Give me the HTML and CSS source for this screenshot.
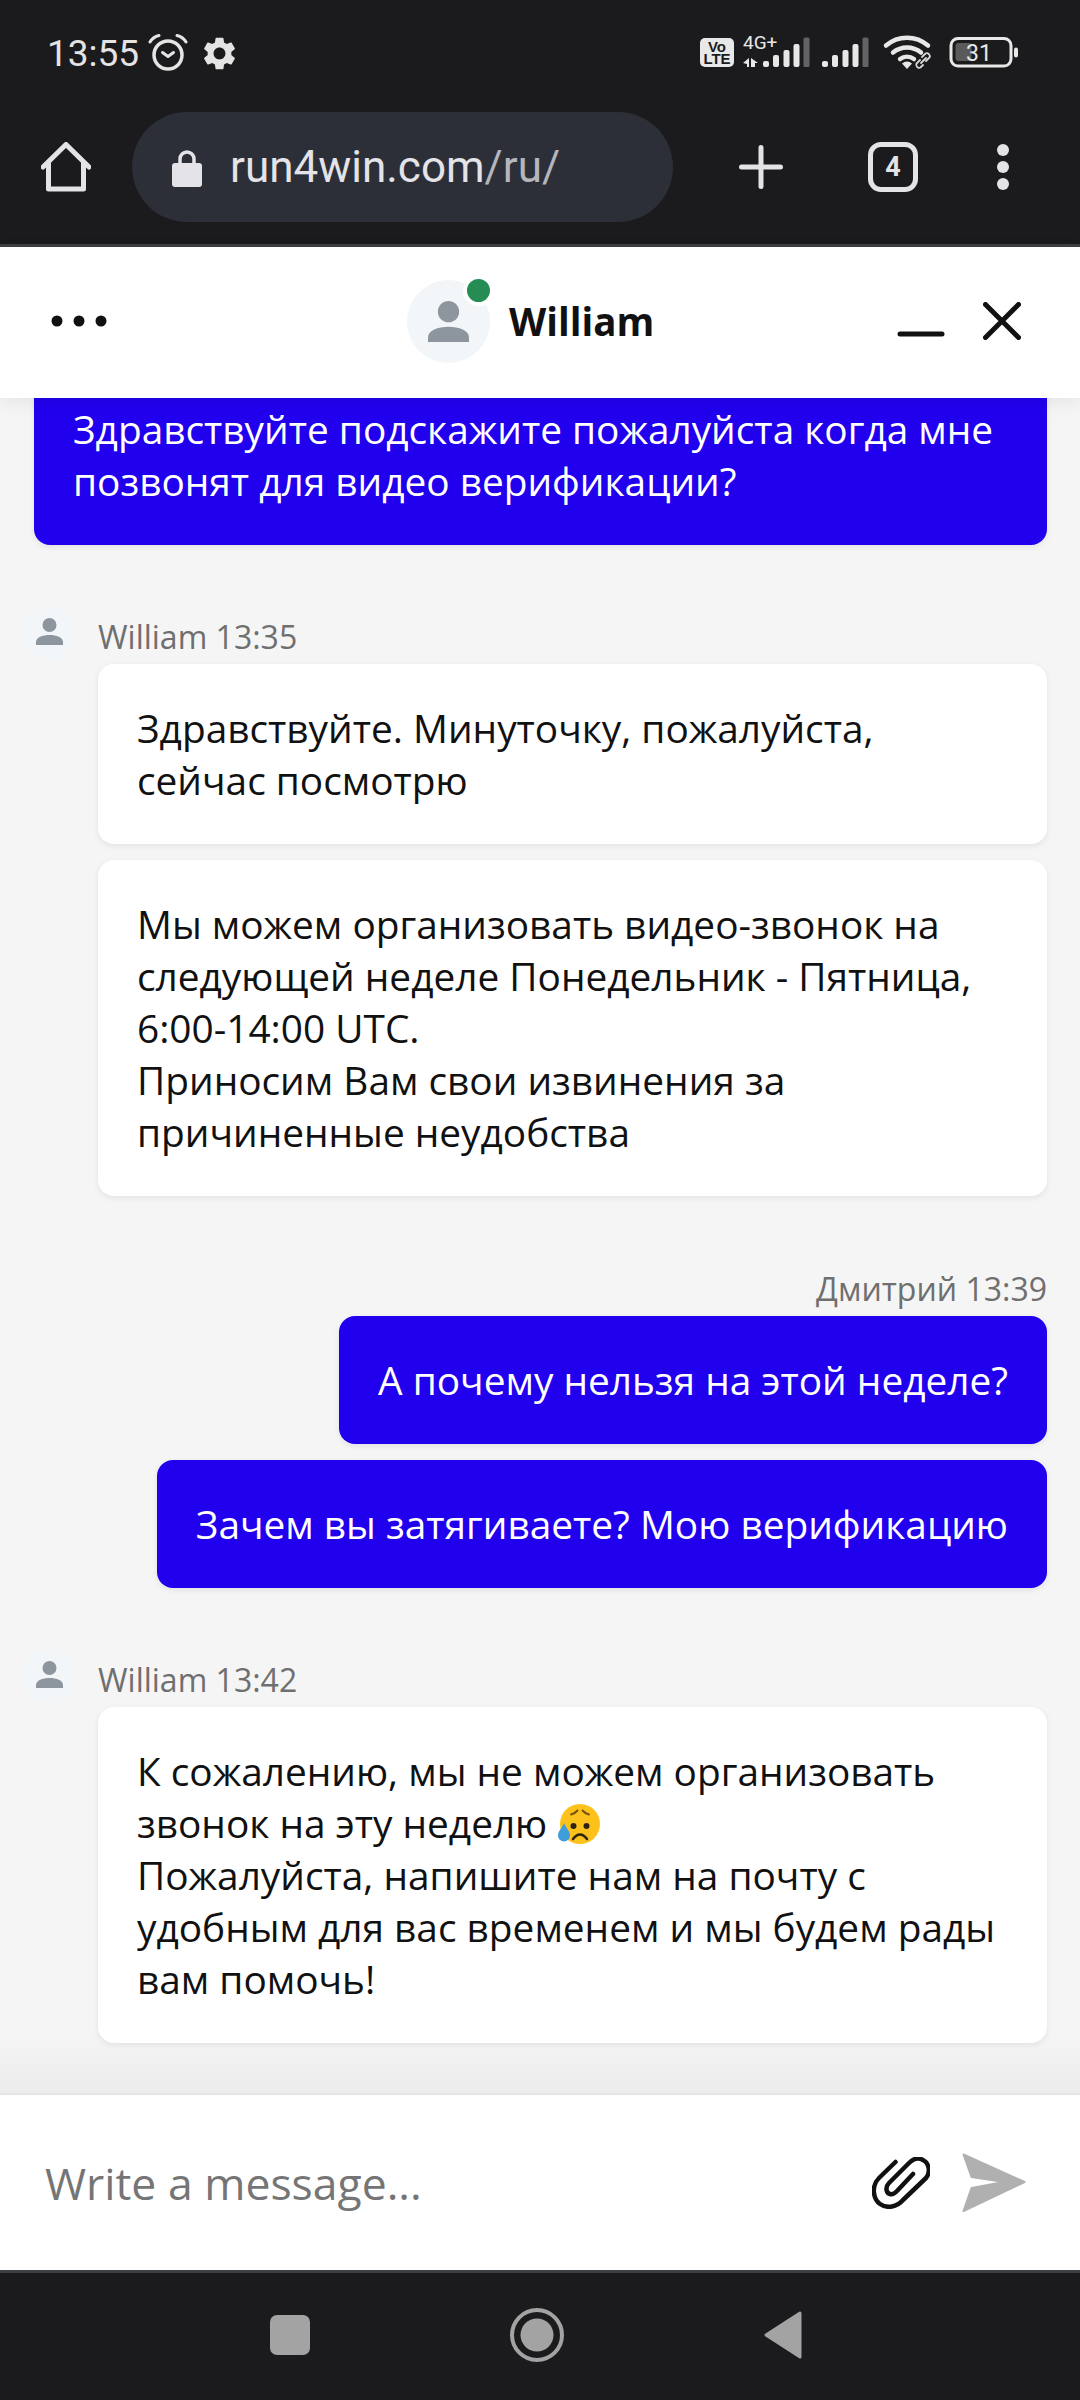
FILE: index.html
```html
<!DOCTYPE html>
<html lang="ru">
<head>
  <meta charset="UTF-8" />
  <meta name="viewport" content="width=device-width, initial-scale=1.0"/>
  <title>run4win chat</title>
  <link rel="stylesheet" href="styles.css">
</head>
<body>

  <svg width="0" height="0" class="defs">
    <defs>
      <symbol id="person" viewBox="0 0 27 27">
        <circle cx="13.5" cy="7" r="7"/>
        <path d="M0 27v-3C0 19.500 6.500 17 13.500 17S27 19.500 27 24v3z"/>
      </symbol>
    </defs>
  </svg>

  <div class="phone">

    <header class="browser">
      <div class="statusbar">
        <span class="clock">13:55</span>
        <svg class="alarm" width="40" height="38" viewBox="0 0 40 38" fill="none" stroke="#e4e4e4" stroke-linecap="round" stroke-linejoin="round">
          <circle cx="20" cy="22" r="14" stroke-width="3.500"/>
          <path d="M2 9Q5 4 11 2.500M29 2.500Q35 4 38 9" stroke-width="3"/>
          <path d="M14.500 19.500L20 23.500l5.500-4" stroke-width="3"/>
        </svg>
        <svg class="gear" width="33" height="33" viewBox="2 2 20 20" fill="#e4e4e4">
          <path d="M19.140 12.940c.04-.3.06-.61.06-.94 0-.32-.02-.64-.07-.94l2.030-1.580c.18-.14.23-.41.120-.61l-1.920-3.320c-.12-.22-.37-.29-.59-.22l-2.390.96c-.5-.38-1.030-.7-1.620-.94l-.36-2.540c-.04-.24-.24-.41-.48-.41h-3.840c-.24 0-.43.17-.47.41l-.36 2.540c-.59.24-1.130.57-1.620.94l-2.390-.96c-.22-.08-.47 0-.59.22L2.740 8.870c-.12.21-.08.47.12.61l2.030 1.580c-.05.3-.09.63-.09.94s.02.64.07.94l-2.030 1.580c-.18.14-.23.41-.12.61l1.920 3.320c.12.22.37.29.59.22l2.390-.96c.5.38 1.030.7 1.620.94l.36 2.540c.05.24.24.41.48.41h3.840c.24 0 .44-.17.47-.41l.36-2.540c.59-.24 1.130-.56 1.620-.94l2.390.96c.22.08.47 0 .59-.22l1.920-3.320c.12-.22.07-.47-.12-.61l-2.010-1.580zM12 15.600c-1.980 0-3.600-1.620-3.600-3.600s1.620-3.600 3.600-3.600 3.600 1.620 3.600 3.600-1.620 3.600-3.600 3.600z"/>
        </svg>

        <svg class="status-icons" width="320" height="42" viewBox="0 0 320 42">
          <rect y="6" width="34" height="29" rx="5" fill="#e8e8e8"/>
          <text class="volte" x="17" y="19.500">Vo</text>
          <text class="volte" x="17" y="32">LTE</text>
          <text class="net" x="43" y="17">4G+</text>
          <path d="M43 31l6-5v9h-2v-3zM51 26l7 5h-3v4h-4z" fill="#e8e8e8"/>
          <g fill="#e8e8e8">
            <rect x="63" y="29" width="6" height="6" rx="2"/>
            <rect x="73" y="23" width="6" height="12" rx="2"/>
            <rect x="83.500" y="18" width="6" height="17" rx="2"/>
            <rect x="93.500" y="12" width="6" height="23" rx="2"/>
            <rect x="103.500" y="5.500" width="6" height="29.500" rx="1.500" fill="#636363"/>
            <rect x="122" y="29" width="6" height="6" rx="2"/>
            <rect x="132" y="23" width="6" height="12" rx="2"/>
            <rect x="142.500" y="18" width="6" height="17" rx="2"/>
            <rect x="152.500" y="12" width="6" height="23" rx="2"/>
            <rect x="162.500" y="5.500" width="6" height="29.500" rx="1.500" fill="#636363"/>
          </g>
          <g fill="none" stroke="#e8e8e8" stroke-linecap="round">
            <path d="M186 13.500A32 32 0 0 1 228 13.500" stroke-width="4.500"/>
            <path d="M193 20.500A22 22 0 0 1 221 20.500" stroke-width="4.500"/>
            <path d="M200 27A12 12 0 0 1 214 27" stroke-width="4.500"/>
          </g>
          <path d="M202 31.500a8 8 0 0 1 10 0L207 37z" fill="#e8e8e8"/>
          <g fill="none" stroke="#d8d8d8" stroke-width="1.800" stroke-linecap="round">
            <path d="M223 33l-2.500 2.500a3 3 0 0 1-4-4L220 28"/>
            <path d="M226 29l3.500-3.500a3 3 0 0 0-4-4L222 25"/>
            <path d="M221 31l5-5"/>
          </g>
          <rect x="251" y="6.500" width="60" height="27.500" rx="7" fill="none" stroke="#e8e8e8" stroke-width="3"/>
          <rect x="255.500" y="11" width="16" height="18" rx="3" fill="#5a5a5a"/>
          <text class="batt" x="279" y="28.500">31</text>
          <rect x="314" y="15.500" width="4" height="10" rx="2" fill="#e8e8e8"/>
        </svg>
      </div>

      <div class="toolbar">
        <svg class="home" width="50" height="50" viewBox="0 0 50 50" fill="none" stroke="#e3e3e8" stroke-width="5" stroke-linecap="round" stroke-linejoin="round">
          <path d="M2 25L25 2.500 48 25"/>
          <path d="M7.500 21v26h35V21"/>
        </svg>
        <div class="omnibox">
          <svg class="lock" width="30" height="40" viewBox="0 0 30 40">
            <path d="M8 19v-7a7 7 0 0 1 14 0v7" fill="none" stroke="#e3e3e8" stroke-width="3.500"/>
            <rect y="16" width="30" height="24" rx="3" fill="#e3e3e8"/>
          </svg>
          <span class="url">run4win.com<span class="url-path">/ru/</span></span>
        </div>
        <svg class="plus" width="44" height="44" viewBox="0 0 44 44" stroke="#e3e3e8" stroke-width="5" stroke-linecap="round">
          <path d="M22 2.500v39M2.500 22h39"/>
        </svg>
        <div class="tabs">4</div>
        <svg class="menu" width="12" height="46" viewBox="0 0 12 46" fill="#e3e3e8">
          <circle cx="6" cy="6" r="6"/>
          <circle cx="6" cy="23" r="6"/>
          <circle cx="6" cy="40" r="6"/>
        </svg>
      </div>
    </header>

    <div class="chat-head">
      <svg class="chat-more" width="56" height="12" viewBox="0 0 56 12" fill="#111">
        <circle cx="6" cy="6" r="5.500"/>
        <circle cx="28" cy="6" r="5.500"/>
        <circle cx="50" cy="6" r="5.500"/>
      </svg>
      <div class="agent">
        <div class="avatar avatar-lg">
          <svg class="person" width="41" height="41"><use href="#person"/></svg>
          <span class="online"></span>
        </div>
        <span class="agent-name">William</span>
      </div>
      <div class="chat-controls">
        <svg width="48" height="38" viewBox="0 0 48 38" stroke="#111" stroke-width="5" stroke-linecap="round">
          <path d="M3 32h42"/>
        </svg>
        <svg width="38" height="38" viewBox="0 0 38 38" stroke="#111" stroke-width="5" stroke-linecap="round">
          <path d="M2.500 2.500l33 33M35.500 2.500l-33 33"/>
        </svg>
      </div>
    </div>

    <main class="messages">

      <div class="group group-out">
        <div class="bubble bubble-out">Здравствуйте подскажите пожалуйста когда мне позвонят для видео верификации?</div>
      </div>

      <div class="group group-in">
        <div class="avatar avatar-sm">
          <svg class="person" width="27" height="27"><use href="#person"/></svg>
        </div>
        <div class="group-body">
          <div class="meta">William 13:35</div>
          <div class="bubble">Здравствуйте. Минуточку, пожалуйста, сейчас посмотрю</div>
          <div class="bubble">Мы можем организовать видео-звонок на следующей неделе Понедельник - Пятница, 6:00-14:00 UTC.<br>Приносим Вам свои извинения за причиненные неудобства</div>
        </div>
      </div>

      <div class="group group-out">
        <div class="meta">Дмитрий 13:39</div>
        <div class="bubble bubble-out">А почему нельзя на этой неделе?</div>
        <div class="bubble bubble-out">Зачем вы затягиваете? Мою верификацию</div>
      </div>

      <div class="group group-in">
        <div class="avatar avatar-sm">
          <svg class="person" width="27" height="27"><use href="#person"/></svg>
        </div>
        <div class="group-body">
          <div class="meta">William 13:42</div>
          <div class="bubble">К сожалению, мы не можем организовать звонок на эту неделю
            <svg class="emoji" width="44" height="44" viewBox="0 0 44 44">
              <circle cx="23" cy="21" r="20" fill="#fcc21b"/>
              <path d="M14 11.500q4-1 6.500-4M32 11.500q-4-1-6.500-4" fill="none" stroke="#7a5313" stroke-width="2" stroke-linecap="round"/>
              <circle cx="16.500" cy="23" r="3" fill="#2f2412"/>
              <circle cx="29.500" cy="23" r="3" fill="#2f2412"/>
              <path d="M16 36q7-9 14 0" fill="none" stroke="#2f2412" stroke-width="2.600" stroke-linecap="round"/>
              <path d="M7 20c-2 5-6 8-6 12.500a6 6 0 0 0 12 0C13 28 9 25 7 20z" fill="#3f9ddc"/>
            </svg><br>Пожалуйста, напишите нам на почту с удобным для вас временем и мы будем рады вам помочь!</div>
        </div>
      </div>

    </main>

    <footer class="composer">
      <span class="composer-hint">Write a message...</span>
      <svg class="clip" width="58" height="52" viewBox="0 0 58 52" fill="none" stroke="#111" stroke-width="4.500" stroke-linecap="round" stroke-linejoin="round">
        <path d="M23.500 5L7 21C-1 29 1 42 8 47c7 5 17 3 23-4l23-22c5-6 3-15-3-18-5-3-10-1-14 3L17 26c-4 4-3 10 1 11 3 1 5-1 7-3l16-17"/>
      </svg>
      <svg class="send" width="64" height="60" viewBox="0 0 64 60" fill="#b0b0b0" stroke="#b0b0b0" stroke-width="2" stroke-linejoin="round">
        <path d="M1.500 1.500L62.500 29 1.500 58 9.500 35 42 29 9.500 24z"/>
      </svg>
    </footer>

    <nav class="navbar">
      <span class="nav-square"></span>
      <svg width="54" height="54" viewBox="0 0 54 54">
        <circle cx="27" cy="27" r="25" fill="none" stroke="#a3a3a3" stroke-width="4"/>
        <circle cx="27" cy="27" r="16.500" fill="#a3a3a3"/>
      </svg>
      <svg width="38" height="48" viewBox="0 0 38 48" fill="#a3a3a3" stroke="#a3a3a3" stroke-width="3" stroke-linejoin="round">
        <path d="M2 24L36 2v44z"/>
      </svg>
    </nav>

  </div>

</body>
</html>
```

FILE: styles.css
```css
html, body {
  margin: 0;
  padding: 0;
  background: #1b1b1d;
}

.defs {
  position: absolute;
}

.phone {
  width: 1080px;
  height: 2400px;
  display: flex;
  flex-direction: column;
  overflow: hidden;
  font-family: "Open Sans", "Noto Sans", sans-serif;
}

/* browser chrome */

.browser {
  background: #1b1b1d;
  border-bottom: 3px solid #3c4043;
  padding-bottom: 16px;
  flex-shrink: 0;
  font-family: Roboto, sans-serif;
}

.statusbar {
  height: 106px;
  display: flex;
  align-items: center;
  padding-left: 47px;
  padding-right: 60px;
}

.clock {
  font-size: 37px;
  color: #e4e4e4;
}

.alarm {
  margin-left: 9px;
  margin-top: -2px;
}

.gear {
  margin-left: 15px;
}

.status-icons {
  margin-left: auto;
}

.volte {
  font-family: "Liberation Sans", sans-serif;
  font-size: 15px;
  font-weight: bold;
  fill: #1b1b1d;
  text-anchor: middle;
}

.net {
  font-family: Roboto, sans-serif;
  font-size: 19px;
  fill: #e8e8e8;
}

.batt {
  font-family: Roboto, sans-serif;
  font-size: 23px;
  fill: #e8e8e8;
  text-anchor: middle;
}

.toolbar {
  height: 122px;
  display: flex;
  align-items: center;
  padding-left: 41px;
}

.omnibox {
  width: 541px;
  height: 110px;
  margin-left: 41px;
  border-radius: 55px;
  background: #2c2f38;
  display: flex;
  align-items: center;
  box-sizing: border-box;
  padding-left: 40px;
}

.url {
  margin-left: 28px;
  font-size: 44px;
  color: #e3e3e8;
}

.url-path {
  color: #b4b5bd;
}

.plus {
  margin-left: 66px;
}

.tabs {
  width: 50px;
  height: 50px;
  margin-left: 85px;
  box-sizing: border-box;
  border: 5px solid #e3e3e8;
  border-radius: 13px;
  display: flex;
  align-items: center;
  justify-content: center;
  font-size: 27px;
  font-weight: bold;
  color: #e3e3e8;
}

.menu {
  margin-left: 79px;
}

/* chat header */

.chat-head {
  height: 151px;
  flex-shrink: 0;
  box-sizing: border-box;
  background: #fff;
  display: flex;
  align-items: center;
  padding-left: 51px;
  padding-right: 59px;
  padding-bottom: 3px;
  position: relative;
  z-index: 2;
  box-shadow: 0 4px 18px rgba(0, 0, 0, 0.07);
}

.agent {
  display: flex;
  align-items: center;
  gap: 19px;
  margin-left: 300px;
}

.agent-name {
  font-size: 38.500px;
  font-weight: bold;
  color: #111;
}

.avatar {
  border-radius: 50%;
  background: #f2f6f9;
  display: flex;
  align-items: center;
  justify-content: center;
  flex-shrink: 0;
  position: relative;
  fill: #8d969e;
}

.avatar-lg {
  width: 83px;
  height: 83px;
}

.avatar-sm {
  width: 54px;
  height: 54px;
}

.avatar-sm .person {
  margin-top: -3px;
}

.online {
  position: absolute;
  top: -5px;
  right: -4px;
  width: 23px;
  height: 23px;
  border-radius: 50%;
  background: #258c54;
  border: 4px solid #fff;
}

.chat-controls {
  margin-left: auto;
  display: flex;
  gap: 38px;
}

/* messages */

.messages {
  flex: 1;
  min-height: 0;
  overflow: hidden;
  display: flex;
  flex-direction: column;
  justify-content: flex-end;
  gap: 61.500px;
  padding: 0 33px 50px 22px;
  background: linear-gradient(#f5f5f5, #f5f5f5 calc(100% - 60px), #ececec);
}

.group {
  display: flex;
  flex-shrink: 0;
}

.group-in {
  gap: 22px;
}

.group-out {
  flex-direction: column;
  align-items: flex-end;
  gap: 16px;
}

.group-body {
  flex: 1;
  display: flex;
  flex-direction: column;
  gap: 16px;
}

.meta {
  font-size: 32px;
  line-height: 41px;
  color: #6f6f6f;
  padding-top: 10px;
  margin-bottom: -9px;
}

.bubble {
  background: #fff;
  color: #111;
  font-size: 38.800px;
  line-height: 52px;
  padding: 38px 39px;
  border-radius: 16px;
  box-shadow: 0 2px 6px rgba(0, 0, 0, 0.08);
}

.bubble-out {
  background: #2100ee;
  color: #fff;
}

.group-out:first-child .bubble-out {
  align-self: stretch;
  margin-left: 12px;
}

.emoji {
  vertical-align: -9px;
}

/* composer */

.composer {
  height: 175px;
  flex-shrink: 0;
  background: #fff;
  border-top: 2px solid #e4e4e4;
  display: flex;
  align-items: center;
  padding-left: 45px;
  padding-right: 54px;
}

.composer-hint {
  font-size: 44.500px;
  color: #757575;
}

.clip {
  margin-left: auto;
}

.send {
  margin-left: 32px;
}

/* android nav */

.navbar {
  height: 130px;
  flex-shrink: 0;
  box-sizing: border-box;
  background: #1b1b1d;
  border-top: 3px solid #3c4043;
  display: flex;
  align-items: center;
  justify-content: center;
  gap: 200px;
  padding-right: 9px;
  padding-bottom: 3px;
}

.nav-square {
  width: 40px;
  height: 40px;
  border-radius: 7px;
  background: #a3a3a3;
}
```
